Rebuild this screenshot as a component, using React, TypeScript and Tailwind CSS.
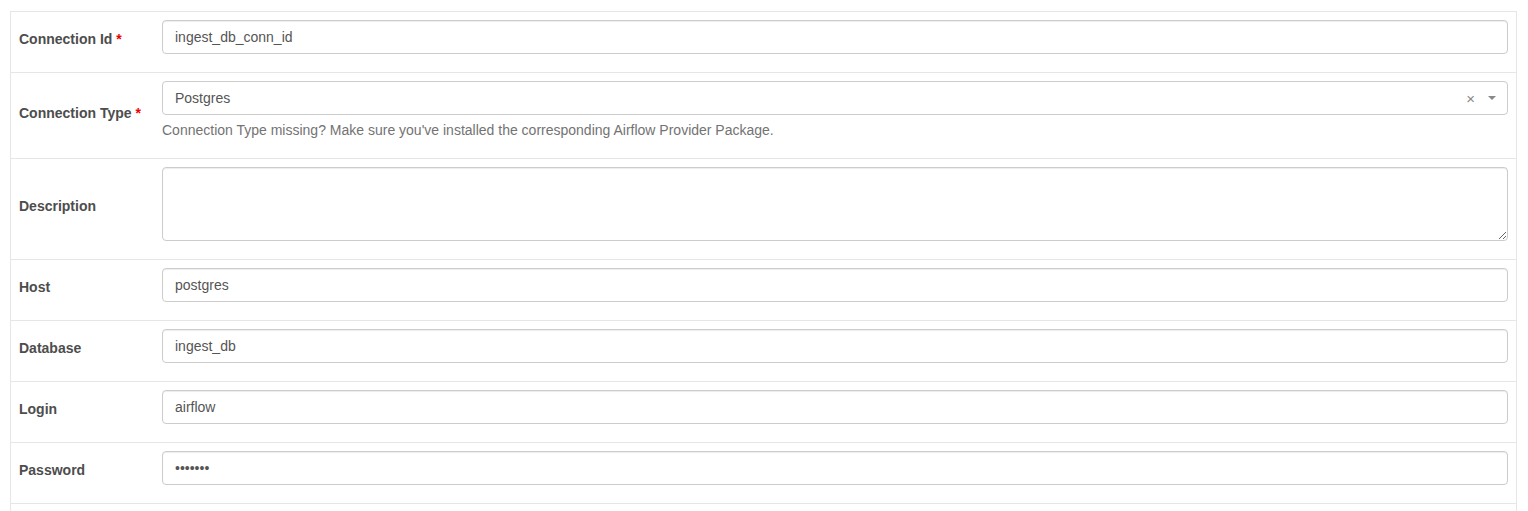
import React from "react";

const font = { fontFamily: '"Liberation Sans", Arial, sans-serif' };

function Label({ label, required }: { label: string; required?: boolean }) {
  return (
    <div className="w-[143px] shrink-0 flex items-center px-2 pt-2 pb-[14px] text-[14px] font-bold text-[#4d4d4d] leading-[20px]">
      <span>
        {label}
        {required && <span className="text-[#e00] ml-[4px]">*</span>}
      </span>
    </div>
  );
}

function Row({ label, required, children }: { label: string; required?: boolean; children: React.ReactNode }) {
  return (
    <div className="flex border-t border-[#e6e6e6]">
      <Label label={label} required={required} />
      <div className="flex-1 px-2 pt-2 pb-[18px]">{children}</div>
    </div>
  );
}

const inputCls =
  "block w-full h-[34px] px-3 py-[6px] text-[14px] leading-[20px] text-[#555] bg-white border border-[#ccc] rounded-[4px] shadow-[inset_0_1px_1px_rgba(0,0,0,0.075)] outline-none";

export default function App() {
  return (
    <div className="bg-white w-[1528px] h-[511px] overflow-hidden pt-[11px] pl-[10px]" style={font}>
      <div className="w-[1507px] border-l border-r border-[#e6e6e6]">
        <Row label="Connection Id" required>
          <input className={inputCls} readOnly defaultValue="ingest_db_conn_id" style={font} />
        </Row>
        <div className="flex border-t border-[#e6e6e6]">
          <Label label="Connection Type" required />
          <div className="flex-1 px-2 pt-2 pb-[18px]">
            <div className="flex items-center h-[34px] pl-3 pr-[11px] text-[14px] text-[#555] bg-white border border-[#ccc] rounded-[4px]">
              <span className="flex-1">Postgres</span>
              <span className="text-[#888] text-[15px] leading-none mr-[13px]">×</span>
              <svg width="8" height="4" viewBox="0 0 8 4">
                <path d="M0 0 L8 0 L4 4 Z" fill="#888" />
              </svg>
            </div>
            <p className="mt-[5px] text-[14px] leading-[20px] text-[#737373]">
              Connection Type missing? Make sure you've installed the corresponding Airflow Provider Package.
            </p>
          </div>
        </div>
        <Row label="Description">
          <textarea
            className="block w-full h-[74px] px-3 py-[6px] text-[14px] leading-[20px] text-[#555] bg-white border border-[#ccc] rounded-[4px] shadow-[inset_0_1px_1px_rgba(0,0,0,0.075)] outline-none"
            rows={3}
            readOnly
            defaultValue=""
            style={font}
          />
        </Row>
        <Row label="Host">
          <input className={inputCls} readOnly defaultValue="postgres" style={font} />
        </Row>
        <Row label="Database">
          <input className={inputCls} readOnly defaultValue="ingest_db" style={font} />
        </Row>
        <Row label="Login">
          <input className={inputCls} readOnly defaultValue="airflow" style={font} />
        </Row>
        <Row label="Password">
          <input className={inputCls} type="password" readOnly defaultValue="airflow" style={font} />
        </Row>
        <div className="h-[20px] border-t border-[#e6e6e6]" />
      </div>
    </div>
  );
}
